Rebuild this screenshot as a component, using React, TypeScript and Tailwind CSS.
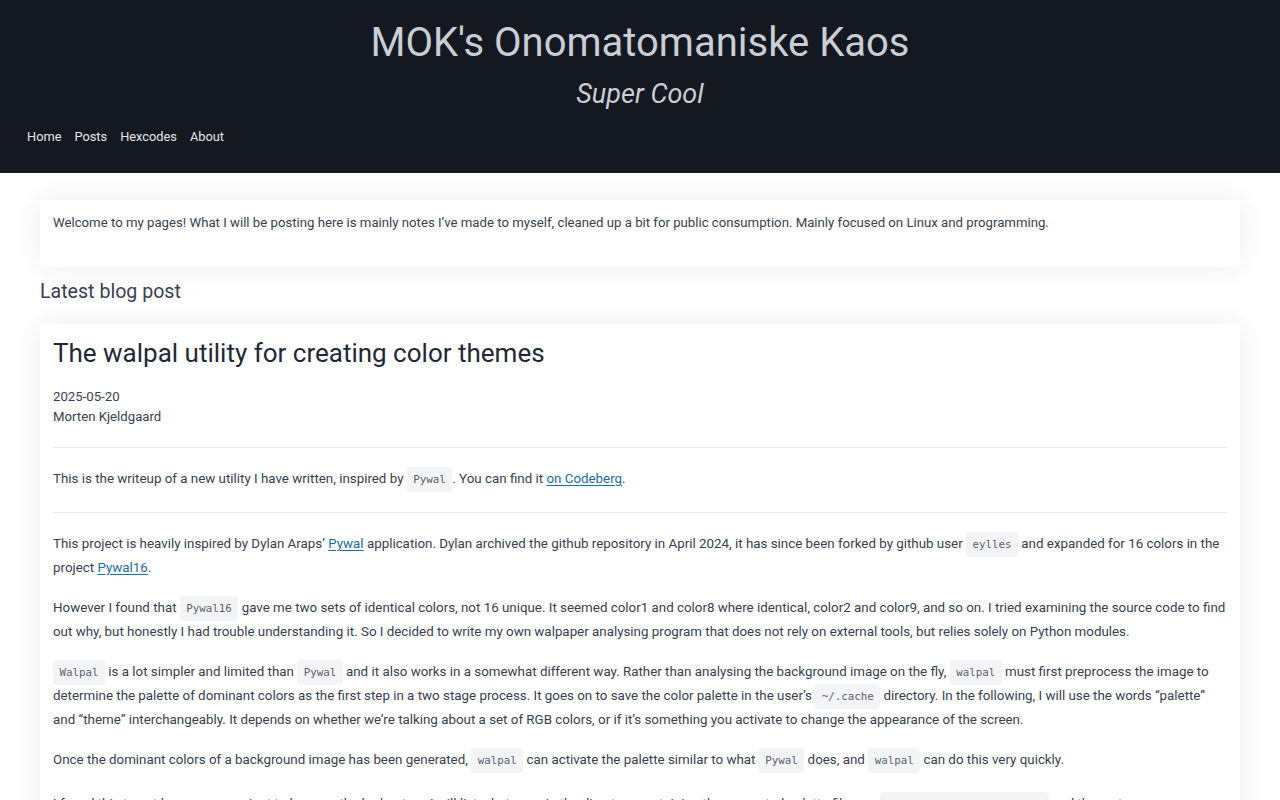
import React from "react";

const C = ({ children }: { children: React.ReactNode }) => (
  <code className="rounded-[4px] bg-[#f3f4f6] px-[6.5px] py-[6px] text-[10.8px] text-[#5b6270] [font-family:'DejaVu_Sans_Mono','Liberation_Mono',monospace]">
    {children}
  </code>
);

const A = ({ children }: { children: React.ReactNode }) => (
  <a href="#" className="text-[#1a6ea3] underline underline-offset-2">
    {children}
  </a>
);

export default function App() {
  return (
    <div className="min-h-screen bg-white [font-family:Roboto,'Liberation_Sans',sans-serif] text-[#374151]">
      <header className="h-[173px] bg-[#141820] px-[27px] pt-[17px]">
        <h1 className="text-center text-[40px] leading-[52px] text-[#c9cdd4]">MOK's Onomatomaniske Kaos</h1>
        <p className="mt-[7px] text-center text-[27px] italic leading-[36px] text-[#c9cdd4]">Super Cool</p>
        <nav className="mt-[15px] flex gap-[13px] text-[12.8px] text-[#e5e7eb]">
          <a href="#">Home</a>
          <a href="#">Posts</a>
          <a href="#">Hexcodes</a>
          <a href="#">About</a>
        </nav>
      </header>
      <main className="px-[40px] pt-[27px]">
        <section className="rounded-[3px] bg-white px-[13px] pt-[13px] pb-[34px] text-[13.2px] leading-[20px] shadow-[0_0_30px_rgba(17,24,39,0.07)]">
          <p>
            Welcome to my pages! What I will be posting here is mainly notes I’ve made to myself, cleaned up a bit for public consumption. Mainly focused on Linux and programming.
          </p>
        </section>
        <h2 className="mt-[12px] text-[19.6px] leading-[26px] text-[#374151]">Latest blog post</h2>
        <article className="mt-[19px] rounded-[3px] bg-white px-[13px] pt-[11px] pb-[20px] text-[13.35px] shadow-[0_0_30px_rgba(17,24,39,0.07)]">
          <h3 className="text-[26px] leading-[36px] text-[#1f2937]">The walpal utility for creating color themes</h3>
          <div className="mt-[16px] text-[13.2px] leading-[20px] text-[#374151]">
            <div>2025-05-20</div>
            <div>Morten Kjeldgaard</div>
          </div>
          <hr className="mt-[20px] border-[#e5e7eb]" />
          <p className="mt-[19px] leading-[23px]">
            This is the writeup of a new utility I have written, inspired by <C>Pywal</C>. You can find it <A>on Codeberg</A>.
          </p>
          <hr className="mt-[21px] border-[#e5e7eb]" />
          <p className="mt-[19px] leading-[23px]">
            This project is heavily inspired by Dylan Araps’ <A>Pywal</A> application. Dylan archived the github repository in April 2024, it has since been forked by github user <C>eylles</C> and expanded for 16 colors in the project <A>Pywal16</A>.
          </p>
          <p className="mt-[17px] leading-[23px]">
            However I found that <C>Pywal16</C> gave me two sets of identical colors, not 16 unique. It seemed color1 and color8 where identical, color2 and color9, and so on. I tried examining the source code to find out why, but honestly I had trouble understanding it. So I decided to write my own walpaper analysing program that does not rely on external tools, but relies solely on Python modules.
          </p>
          <p className="mt-[17px] leading-[23px]">
            <C>Walpal</C> is a lot simpler and limited than <C>Pywal</C> and it also works in a somewhat different way. Rather than analysing the background image on the fly, <C>walpal</C> must first preprocess the image to determine the palette of dominant colors as the first step in a two stage process. It goes on to save the color palette in the user’s <C>~/.cache</C> directory. In the following, I will use the words “palette” and “theme” interchangeably. It depends on whether we’re talking about a set of RGB colors, or if it’s something you activate to change the appearance of the screen.
          </p>
          <p className="mt-[17px] leading-[23px]">
            Once the dominant colors of a background image has been generated, <C>walpal</C> can activate the palette similar to what <C>Pywal</C> does, and <C>walpal</C> can do this very quickly.
          </p>
          <p className="mt-[20px] leading-[23px]">
            I found this to not be very convenient to keep on the lookout, so I will list what goes in the directory containing the generated palette files, as <C>~/.cache/walpal/palettes</C> and the rest.
          </p>
        </article>
      </main>
    </div>
  );
}
